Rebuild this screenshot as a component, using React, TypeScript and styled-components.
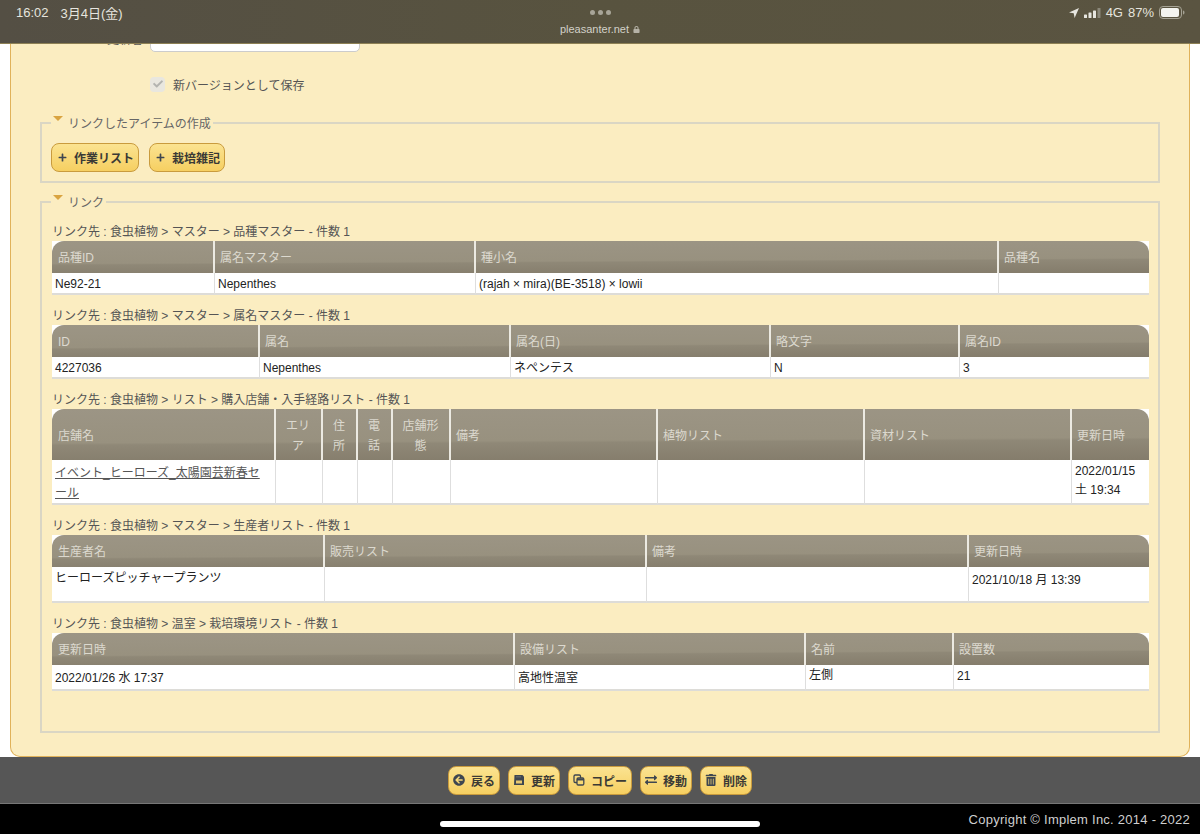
import { ReactNode } from "react";
import styled, { createGlobalStyle } from "styled-components";
import {
  FaArrowCircleLeft,
  FaCheck,
  FaExchangeAlt,
  FaLock,
  FaPlus,
  FaTrashAlt,
} from "react-icons/fa";

const GlobalStyle = createGlobalStyle`
  html, body {
    margin: 0;
    padding: 0;
    background: #fff;
    font-family: "Liberation Sans", "Noto Sans CJK JP", sans-serif;
    font-size: 12px;
  }
`;

const Root = styled.div`
  position: relative;
  width: 1200px;
  height: 834px;
  overflow: hidden;
  display: flex;
  flex-direction: column;
`;

const StatusBar = styled.div`
  position: absolute;
  top: 0;
  left: 0;
  right: 0;
  height: 44px;
  z-index: 5;
  padding: 0 16px;
  box-sizing: border-box;
  display: flex;
  justify-content: space-between;
  background: linear-gradient(90deg, #544f44, #58533f 50%, #5a5441);
  border-bottom: 1px solid #8d8054;
  color: #e6e5df;
  font-size: 13px;
`;

const Clock = styled.div`
  display: flex;
  gap: 12px;
  height: 25px;
  align-items: center;
`;

const SiteInfo = styled.div`
  position: absolute;
  left: 0;
  right: 0;
  top: 10px;
  display: flex;
  flex-direction: column;
  align-items: center;
  gap: 7px;
`;

const Dots = styled.div`
  display: flex;
  gap: 3px;
  span {
    width: 5px;
    height: 5px;
    border-radius: 50%;
    background: #a8a598;
  }
`;

const SiteName = styled.div`
  display: flex;
  align-items: center;
  gap: 4px;
  font-size: 11px;
  line-height: 14px;
  color: #d3d1c8;
  svg {
    color: #b5b2a6;
  }
`;

const Indicators = styled.div`
  display: flex;
  align-items: center;
  gap: 5px;
  height: 25px;
  margin-right: -1px;
`;

const Content = styled.main`
  flex: 1;
  min-height: 0;
  overflow: hidden;
  display: flex;
  flex-direction: column;
  justify-content: flex-end;
`;

const Panel = styled.div`
  flex-shrink: 0;
  margin: 0 10px;
  padding: 0 29px 23px;
  background: #fbedc1;
  border: 1px solid #e0b25a;
  border-top: 0;
  border-radius: 0 0 10px 10px;
`;

const FormRow = styled.div`
  display: flex;
  gap: 7px;
  height: 30px;
`;

const FormLabel = styled.label`
  width: 103px;
  padding-top: 6px;
  line-height: 24px;
  text-align: right;
  color: #555;
`;

const TextInput = styled.div`
  width: 208px;
  background: #fff;
  border: 1px solid #ccc;
  border-radius: 5px;
`;

const CheckRow = styled.div`
  display: flex;
  align-items: center;
  gap: 8px;
  height: 16px;
  margin: 24px 0 23px 110px;
  color: #555;
`;

const CheckBox = styled.span`
  width: 15px;
  height: 15px;
  display: flex;
  align-items: center;
  justify-content: center;
  border-radius: 4px;
  background: #e9e7df;
  color: #b4b4b0;
`;

const Group = styled.fieldset<{ $top: number; $bottom: number }>`
  margin: 0 0 11px;
  padding: ${(p) => p.$top}px 9px ${(p) => p.$bottom}px;
  border: 2px solid #dad6c4;
  min-width: 0;
  &:last-child {
    margin-bottom: 0;
  }
`;

const GroupLegend = styled.legend`
  display: flex;
  align-items: flex-start;
  height: 16px;
  line-height: 18px;
  padding: 0 2px;
  color: #666;
`;

const Caret = styled.span`
  width: 0;
  height: 0;
  margin: 1px 5px 0 0;
  border-style: solid;
  border-width: 5px 5px 0;
  border-color: #d9a441 transparent transparent;
`;

const ButtonRow = styled.div`
  display: flex;
  gap: 10px;
`;

const YellowButton = styled.button<{ $wide?: boolean }>`
  height: 29px;
  box-sizing: border-box;
  padding: ${(p) => (p.$wide ? "0 4px 0 6px" : "0 4px")};
  display: inline-flex;
  align-items: center;
  gap: ${(p) => (p.$wide ? 7 : 6)}px;
  background: linear-gradient(#fbe391, #f6cf61);
  border: 1px solid #c99b3d;
  border-radius: 8px;
  color: #3b3a35;
  font-family: inherit;
  font-size: 12px;
  font-weight: 700;
  white-space: nowrap;
  svg {
    flex-shrink: 0;
    color: #3e4650;
  }
`;

const LinkSection = styled.section`
  margin: 0 0 13px 1px;
  &:last-of-type {
    margin-bottom: 0;
  }
`;

const Caption = styled.div`
  height: 16px;
  line-height: 16px;
  margin-bottom: 1px;
  color: #555;
  white-space: nowrap;
`;

const GridTable = styled.table`
  table-layout: fixed;
  width: 1097px;
  border-collapse: separate;
  border-spacing: 0;
  background: #fff;
  color: #222;
`;

const HeadRow = styled.tr<{ $h: number }>`
  height: ${(p) => p.$h}px;
  background: linear-gradient(
    179.7deg,
    #9c9585 0%,
    #98917f 60%,
    #8f8877 64%,
    #847c6b 100%
  );
`;

const HeadCell = styled.th<{ $center?: boolean }>`
  padding: 2px 6px 0 5px;
  box-sizing: border-box;
  border-right: 2px solid #eceae2;
  color: #dcd9cf;
  font-weight: 400;
  line-height: 20px;
  text-align: ${(p) => (p.$center ? "center" : "left")};
  &:first-child {
    padding-left: 6px;
    border-top-left-radius: 12px;
  }
  &:last-child {
    border-right: 0;
    border-top-right-radius: 12px;
  }
`;

const BodyRow = styled.tr<{ $h: number }>`
  height: ${(p) => p.$h}px;
`;

const BodyCell = styled.td<{ $pad?: number; $leading?: number }>`
  padding: ${(p) => p.$pad ?? 2}px 4px 0 3px;
  box-sizing: border-box;
  vertical-align: top;
  border-right: 1px solid #dedede;
  border-bottom: 2px solid #dddcd8;
  line-height: ${(p) => p.$leading ?? 18}px;
  line-break: loose;
  &:last-child {
    border-right: 0;
  }
`;

const StoreLink = styled.a`
  color: #555;
  text-decoration: underline;
`;

const ActionBar = styled.div`
  height: 47px;
  flex-shrink: 0;
  box-sizing: border-box;
  display: flex;
  align-items: center;
  justify-content: center;
  gap: 8px;
  background: #565656;
  border-bottom: 1px solid #777;
`;

const Footer = styled.footer`
  height: 30px;
  flex-shrink: 0;
  padding-right: 10px;
  display: flex;
  align-items: center;
  justify-content: flex-end;
  background: #000;
  color: #cfcfcf;
  font-size: 13px;
  letter-spacing: 0.25px;
`;

const HomeIndicator = styled.div`
  position: absolute;
  left: 440px;
  bottom: 7px;
  width: 320px;
  height: 6px;
  border-radius: 3px;
  background: #fff;
`;

type Column = { label: string; width: number; center?: boolean };
type Cell = { text: ReactNode; pad?: number; leading?: number };

type LinkTable = {
  caption: string;
  headHeight: number;
  rowHeight: number;
  columns: Column[];
  cells: Cell[];
};

const tables: LinkTable[] = [
  {
    caption: "リンク先 : 食虫植物 > マスター > 品種マスター - 件数 1",
    headHeight: 32,
    rowHeight: 22,
    columns: [
      { label: "品種ID", width: 163 },
      { label: "属名マスター", width: 261 },
      { label: "種小名", width: 523 },
      { label: "品種名", width: 150 },
    ],
    cells: [
      { text: "Ne92-21" },
      { text: "Nepenthes" },
      { text: "(rajah × mira)(BE-3518) × lowii" },
      { text: "" },
    ],
  },
  {
    caption: "リンク先 : 食虫植物 > マスター > 属名マスター - 件数 1",
    headHeight: 32,
    rowHeight: 22,
    columns: [
      { label: "ID", width: 208 },
      { label: "属名", width: 251 },
      { label: "属名(日)", width: 260 },
      { label: "略文字", width: 189 },
      { label: "属名ID", width: 189 },
    ],
    cells: [
      { text: "4227036" },
      { text: "Nepenthes" },
      { text: "ネペンテス" },
      { text: "N" },
      { text: "3" },
    ],
  },
  {
    caption: "リンク先 : 食虫植物 > リスト > 購入店舗・入手経路リスト - 件数 1",
    headHeight: 51,
    rowHeight: 45,
    columns: [
      { label: "店舗名", width: 224 },
      { label: "エリア", width: 47, center: true },
      { label: "住所", width: 35, center: true },
      { label: "電話", width: 35, center: true },
      { label: "店舗形態", width: 58, center: true },
      { label: "備考", width: 207 },
      { label: "植物リスト", width: 207 },
      { label: "資材リスト", width: 207 },
      { label: "更新日時", width: 77 },
    ],
    cells: [
      {
        text: <StoreLink>イベント_ヒーローズ_太陽園芸新春セール</StoreLink>,
        pad: 4,
        leading: 19.5,
      },
      { text: "" },
      { text: "" },
      { text: "" },
      { text: "" },
      { text: "" },
      { text: "" },
      { text: "" },
      { text: "2022/01/15 土 19:34", pad: 2, leading: 19 },
    ],
  },
  {
    caption: "リンク先 : 食虫植物 > マスター > 生産者リスト - 件数 1",
    headHeight: 32,
    rowHeight: 36,
    columns: [
      { label: "生産者名", width: 273 },
      { label: "販売リスト", width: 322 },
      { label: "備考", width: 322 },
      { label: "更新日時", width: 180 },
    ],
    cells: [
      { text: "ヒーローズピッチャープランツ", pad: 2 },
      { text: "" },
      { text: "" },
      { text: "2021/10/18 月 13:39", pad: 4 },
    ],
  },
  {
    caption: "リンク先 : 食虫植物 > 温室 > 栽培環境リスト - 件数 1",
    headHeight: 32,
    rowHeight: 26,
    columns: [
      { label: "更新日時", width: 463 },
      { label: "設備リスト", width: 291 },
      { label: "名前", width: 148 },
      { label: "設置数", width: 195 },
    ],
    cells: [
      { text: "2022/01/26 水 17:37", pad: 4 },
      { text: "高地性温室", pad: 4 },
      { text: "左側", pad: 1 },
      { text: "21", pad: 2 },
    ],
  },
];

function LocationIcon() {
  return (
    <svg width="10" height="10" viewBox="0 0 10 10" fill="#e6e5df">
      <path d="M0 4.600 10 0 5.600 10 4.700 5.300Z" />
    </svg>
  );
}

function SignalIcon() {
  return (
    <svg width="17" height="10" viewBox="0 0 17 10">
      <rect x="0" y="6.500" width="3" height="3.500" rx="0.600" fill="#e6e5df" />
      <rect x="4.500" y="4.500" width="3" height="5.500" rx="0.600" fill="#e6e5df" />
      <rect x="9" y="2.500" width="3" height="7.500" rx="0.600" fill="#e6e5df" />
      <rect x="13.500" y="0" width="3" height="10" rx="0.600" fill="#8b887a" />
    </svg>
  );
}

function BatteryIcon() {
  return (
    <svg width="26" height="13" viewBox="0 0 26 13">
      <rect x="0.500" y="0.500" width="22" height="12" rx="3.500" fill="none" stroke="#a5a294" />
      <rect x="2" y="2" width="18" height="9" rx="2" fill="#f4f4f0" />
      <path d="M24 4.500c1 .3 1.500 1 1.500 2s-.5 1.700-1.500 2z" fill="#a5a294" />
    </svg>
  );
}

function DiskIcon() {
  return (
    <svg width="12" height="12" viewBox="0 0 12 12">
      <path d="M1.500 1h8L11 2.500v8.500H1z" fill="#3e4650" />
      <rect x="3" y="6.500" width="6" height="3" fill="#e9c870" />
      <rect x="3" y="2" width="5" height="1.500" fill="#5c6268" />
    </svg>
  );
}

function CopyIcon() {
  return (
    <svg width="12" height="12" viewBox="0 0 12 12" fill="none" stroke="#3e4650" strokeWidth="1.300">
      <rect x="1" y="1" width="6.500" height="7.500" rx="1.200" />
      <rect x="4" y="4" width="6.800" height="7" rx="1.200" fill="#f7d873" />
      <path d="M4 5.500h6.800" strokeWidth="2" />
    </svg>
  );
}

function LinkedTable({ table }: { table: LinkTable }) {
  return (
    <LinkSection>
      <Caption>{table.caption}</Caption>
      <GridTable>
        <colgroup>
          {table.columns.map((c) => (
            <col key={c.label} width={c.width} />
          ))}
        </colgroup>
        <thead>
          <HeadRow $h={table.headHeight}>
            {table.columns.map((c) => (
              <HeadCell key={c.label} $center={c.center}>
                {c.label}
              </HeadCell>
            ))}
          </HeadRow>
        </thead>
        <tbody>
          <BodyRow $h={table.rowHeight}>
            {table.cells.map((cell, i) => (
              <BodyCell key={i} $pad={cell.pad} $leading={cell.leading}>
                {cell.text}
              </BodyCell>
            ))}
          </BodyRow>
        </tbody>
      </GridTable>
    </LinkSection>
  );
}

export default function App() {
  return (
    <Root>
      <GlobalStyle />
      <StatusBar>
        <Clock>
          <span>16:02</span>
          <span>3月4日(金)</span>
        </Clock>
        <SiteInfo>
          <Dots>
            <span />
            <span />
            <span />
          </Dots>
          <SiteName>
            pleasanter.net
            <FaLock size={7} />
          </SiteName>
        </SiteInfo>
        <Indicators>
          <LocationIcon />
          <SignalIcon />
          <span>4G</span>
          <span>87%</span>
          <BatteryIcon />
        </Indicators>
      </StatusBar>

      <Content>
        <Panel>
          <FormRow>
            <FormLabel>更新者</FormLabel>
            <TextInput />
          </FormRow>
          <CheckRow>
            <CheckBox>
              <FaCheck size={10} />
            </CheckBox>
            新バージョンとして保存
          </CheckRow>

          <Group $top={12} $bottom={9}>
            <GroupLegend>
              <Caret />
              リンクしたアイテムの作成
            </GroupLegend>
            <ButtonRow>
              <YellowButton $wide>
                <FaPlus size={9} />
                作業リスト
              </YellowButton>
              <YellowButton $wide>
                <FaPlus size={9} />
                栽培雑記
              </YellowButton>
            </ButtonRow>
          </Group>

          <Group $top={14} $bottom={40}>
            <GroupLegend>
              <Caret />
              リンク
            </GroupLegend>
            {tables.map((t) => (
              <LinkedTable key={t.caption} table={t} />
            ))}
          </Group>
        </Panel>
      </Content>

      <ActionBar>
        <YellowButton>
          <FaArrowCircleLeft size={12} />
          戻る
        </YellowButton>
        <YellowButton>
          <DiskIcon />
          更新
        </YellowButton>
        <YellowButton>
          <CopyIcon />
          コピー
        </YellowButton>
        <YellowButton>
          <FaExchangeAlt size={12} />
          移動
        </YellowButton>
        <YellowButton>
          <FaTrashAlt size={12} />
          削除
        </YellowButton>
      </ActionBar>
      <Footer>Copyright © Implem Inc. 2014 - 2022</Footer>
      <HomeIndicator />
    </Root>
  );
}
